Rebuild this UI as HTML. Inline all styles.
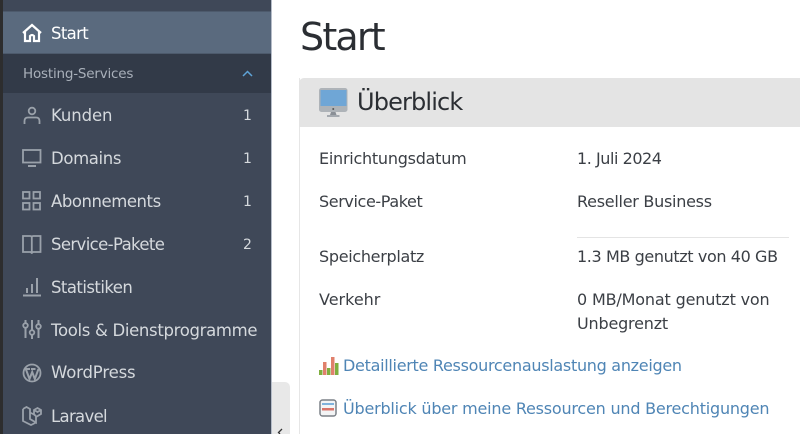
<!DOCTYPE html>
<html><head><meta charset="utf-8"><style>
html,body{margin:0;padding:0;background:#fff;width:800px;height:434px;overflow:hidden}
#p{position:relative;width:800px;height:434px;overflow:hidden;background:#fff;font-family:"DejaVu Sans","Liberation Sans",sans-serif}
.a{position:absolute;white-space:nowrap}
.n{left:51px;font-size:16.5px;color:#d5d9dd;line-height:20px}
.c{left:243px;font-size:14px;color:#d5d9dd;line-height:20px}
.t{font-size:16px;line-height:20px;color:#3b3f45;letter-spacing:-.39px}
.l{font-size:16px;line-height:20px;color:#4f85b5}
svg{position:absolute;overflow:hidden}
.i{fill:none;stroke:#9aa1aa;stroke-width:1.8}
</style></head><body><div id="p">
<div class="a" style="left:0;top:0;width:271px;height:434px;background:#3f4858"></div>
<div class="a" style="left:0;top:0;width:3px;height:434px;background:#2d2d2e"></div>
<div class="a" style="left:271px;top:0;width:1px;height:434px;background:#b5bcc8"></div>
<div class="a" style="left:3px;top:11px;width:268px;height:43px;background:#5a6a7e;border-top:1px solid #4d5a6c;border-bottom:1px solid #4d5a6c;box-sizing:border-box"></div>
<div class="a" style="left:3px;top:54px;width:268px;height:39px;background:#323a48"></div>
<svg style="left:22px;top:23px" width="20" height="20" viewBox="0 0 20 20"><path d="M1 10 L10 2 L19 10 M3 9 V18 H8 V13 Q10 11 12 13 V18 H17 V9" fill="none" stroke="#fff" stroke-width="2.200"/></svg>
<div class="a n" style="top:24px;color:#fff;letter-spacing:-.65px">Start</div>
<div class="a" style="left:23px;top:64px;font-size:13.5px;line-height:20px;color:#a9b0ba;letter-spacing:-.2px">Hosting-Services</div>
<svg style="left:242px;top:70px" width="11" height="7" viewBox="0 0 11 7"><path d="M1 6 L5.500 1.500 L10 6" fill="none" stroke="#5fa4d8" stroke-width="1.500"/></svg>

<svg class="i" style="left:23px;top:106px" width="18" height="19" viewBox="0 0 18 19"><circle cx="9" cy="5" r="3.300"/><path d="M1.500 18 V15 Q1.500 11.500 5 11.500 H13 Q16.500 11.500 16.500 15 V18"/></svg>
<div class="a n" style="top:106px;letter-spacing:-.1px">Kunden</div><div class="a c" style="top:106px">1</div>

<svg class="i" style="left:22px;top:149px" width="20" height="19" viewBox="0 0 20 19"><rect x="1" y="1" width="17.500" height="12.500"/><path d="M6 17 H14" stroke-width="2"/></svg>
<div class="a n" style="top:149px;letter-spacing:-.36px">Domains</div><div class="a c" style="top:149px">1</div>

<svg class="i" style="left:22px;top:191px" width="20" height="20" viewBox="0 0 20 20"><rect x="1" y="1" width="6.500" height="6.500"/><rect x="11.500" y="1" width="6.500" height="6.500"/><rect x="1" y="12" width="6.500" height="6.500"/><rect x="11.500" y="12" width="6.500" height="6.500"/></svg>
<div class="a n" style="top:192px;letter-spacing:-.45px">Abonnements</div><div class="a c" style="top:192px">1</div>

<svg class="i" style="left:22px;top:235px" width="20" height="19" viewBox="0 0 20 19"><path d="M1 1 H8 Q9.800 1 9.800 2.500 Q9.800 1 11.500 1 H18.500 V17 H11 L9.800 18 L8.500 17 H1 Z M9.800 2.500 V17.500"/></svg>
<div class="a n" style="top:235px;letter-spacing:-.62px">Service-Pakete</div><div class="a c" style="top:235px">2</div>

<svg class="i" style="left:22px;top:277px" width="20" height="20" viewBox="0 0 20 20"><path d="M1 18.500 H19 M5 16 V11 M10 16 V7 M15 16 V1" stroke-width="2"/></svg>
<div class="a n" style="top:278px;letter-spacing:-.55px">Statistiken</div>

<svg class="i" style="left:22px;top:320px" width="20" height="20" viewBox="0 0 20 20"><path d="M3.500 0 V3 M3.500 8 V18 M10 0 V10 M10 15 V19 M16.500 0 V4 M16.500 9 V18" stroke-width="2"/><circle cx="3.500" cy="5.500" r="2.300"/><circle cx="10" cy="12.500" r="2.300"/><circle cx="16.500" cy="6.500" r="2.300"/></svg>
<div class="a n" style="top:321px;letter-spacing:-.32px">Tools &amp; Dienstprogramme</div>

<svg class="i" style="left:22px;top:363px" width="20" height="20" viewBox="0 0 20 20"><circle cx="10" cy="10" r="8.500"/><path d="M3.800 6 L7.500 16 L10.200 9 L12.800 16 L16.500 6 M3 6 H8 M9 6 H13.500" stroke-width="2"/></svg>
<div class="a n" style="top:363px;letter-spacing:-.15px">WordPress</div>

<svg class="i" style="left:22px;top:406px" width="20" height="20" viewBox="0 0 20 20"><path d="M1 3 L4.500 1 L8 3 V13 L14 16.500 V11 L19 8 V4 L15.500 2 L12 4 V8.500 L14 10 M8 6.500 L12 8.500 M1 3 V15 L9 19 L14 16.500 M12 4 L15.500 6 L19 4"/></svg>
<div class="a n" style="top:407px;letter-spacing:-.68px">Laravel</div>

<div class="a" style="left:272px;top:382px;width:18px;height:52px;background:#e8e8e8;border-radius:0 5px 0 0"></div>
<svg style="left:276px;top:428px" width="8" height="6" viewBox="0 0 8 6"><path d="M6 1 L2.500 4.500 L4 6" fill="none" stroke="#333" stroke-width="1.300"/></svg>

<div class="a" style="left:300px;top:12px;font-size:38px;line-height:50px;color:#2b2e33;letter-spacing:-1.800px">Start</div>

<div class="a" style="left:299px;top:78px;width:501px;height:356px;border-left:1px solid #e6e6e6;box-sizing:border-box"></div>
<div class="a" style="left:299px;top:78px;width:501px;height:49px;background:#e4e4e4;border-radius:5px 0 0 0"></div>
<svg style="left:319px;top:88px" width="29" height="29" viewBox="0 0 29 29"><rect x="0" y="0" width="28.500" height="24" rx="2.500" fill="#aeb3b8"/><rect x="1.500" y="2" width="26" height="16" fill="#6fa6d6"/><circle cx="14.250" cy="21" r="1" fill="#555"/><path d="M12 24 H16.500 L17.500 27 H11 Z" fill="#8a8f96"/><rect x="8" y="27" width="12.500" height="2" fill="#a4a9af"/></svg>
<div class="a" style="left:357px;top:87px;font-size:24px;line-height:30px;color:#2b2e33;letter-spacing:-.85px">Überblick</div>

<div class="a t" style="left:319px;top:149px;letter-spacing:-.25px">Einrichtungsdatum</div>
<div class="a t" style="left:577px;top:149px;letter-spacing:-.45px">1. Juli 2024</div>
<div class="a t" style="left:319px;top:192px">Service-Paket</div>
<div class="a t" style="left:577px;top:192px;letter-spacing:-.27px">Reseller Business</div>
<div class="a" style="left:577px;top:237px;width:212px;height:1px;background:#e4e4e4"></div>
<div class="a t" style="left:319px;top:247px;letter-spacing:-.31px">Speicherplatz</div>
<div class="a t" style="left:577px;top:247px">1.3 MB genutzt von 40 GB</div>
<div class="a t" style="left:319px;top:290px;letter-spacing:0">Verkehr</div>
<div class="a t" style="left:577px;top:290px;letter-spacing:-.16px">0 MB/Monat genutzt von</div>
<div class="a t" style="left:577px;top:314px;letter-spacing:-.19px">Unbegrenzt</div>

<svg style="left:319px;top:356px" width="20" height="20" viewBox="0 0 20 20"><rect x="0" y="14" width="3.500" height="5" fill="#7fae3f"/><rect x="4" y="6" width="3.500" height="13" fill="#e0806c"/><rect x="8" y="12" width="3.500" height="7" fill="#7fae3f"/><rect x="12" y="1" width="3.500" height="18" fill="#e0806c"/><rect x="16" y="7" width="3.500" height="12" fill="#7fae3f"/></svg>
<div class="a l" style="left:343px;top:356px;letter-spacing:-.29px">Detaillierte Ressourcenauslastung anzeigen</div>
<svg style="left:319px;top:399px" width="18" height="18" viewBox="0 0 18 18"><rect x="1" y="1" width="16" height="16" rx="2.500" fill="#f3f4f5" stroke="#7b8087" stroke-width="1.500"/><rect x="3" y="4" width="12" height="2" fill="#7fb2dc"/><rect x="3" y="9" width="12" height="2.500" fill="#d9746a"/></svg>
<div class="a l" style="left:343px;top:399px;letter-spacing:-.21px">Überblick über meine Ressourcen und Berechtigungen</div>
</div></body></html>
